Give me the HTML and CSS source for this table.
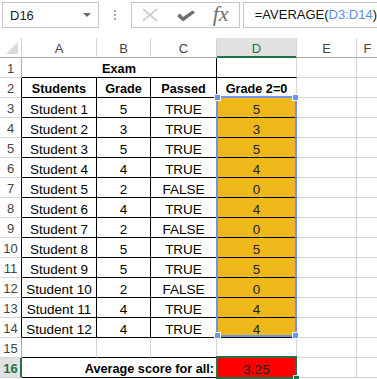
FILE: index.html
```html
<!DOCTYPE html>
<html lang="en">
<head>
    <meta charset="UTF-8">
    <title>Exam - AVERAGE</title>
    <link rel="stylesheet" href="styles.css">
</head>
<body>
    <!-- Formula bar -->
    <div class="formula-bar">
        <div class="name-box">
            <span>D16</span>
            <span class="caret"></span>
        </div>
        <div class="dots"><i></i><i></i><i></i></div>
        <div class="fx-box">
            <svg class="icon-x" width="18" height="14" viewBox="0 0 18 14">
                <path d="M2 1 L16 13 M16 1 L2 13" stroke="#c4c4c4" stroke-width="1.6" fill="none"/>
            </svg>
            <svg class="icon-check" width="20" height="12" viewBox="0 0 20 12">
                <path d="M1 6 L4 3.5 L7 7 L16.5 0.5 L19 2.5 L7 11.5 Z" fill="#6e6e6e"/>
            </svg>
            <span class="fx">fx</span>
        </div>
        <div class="formula">=AVERAGE(<span class="ref">D3:D14</span>)</div>
    </div>

    <!-- Sheet -->
    <div class="sheet">
        <!-- column headers -->
        <div class="corner"></div>
        <div class="ch">A</div>
        <div class="ch">B</div>
        <div class="ch">C</div>
        <div class="ch sel">D</div>
        <div class="ch">E</div>
        <div class="ch">F</div>

        <!-- row 1 -->
        <div class="rh">1</div>
        <div class="c span3 b bb br">Exam</div>
        <div class="c bb"></div>
        <div class="c"></div>
        <div class="c"></div>

        <!-- row 2 -->
        <div class="rh bk">2</div>
        <div class="c b bb br">Students</div>
        <div class="c b bb br">Grade</div>
        <div class="c b bb br">Passed</div>
        <div class="c b bb">Grade 2=0</div>
        <div class="c"></div>
        <div class="c"></div>

        <div class="rh bk">3</div>
        <div class="c bb br">Student 1</div>
        <div class="c bb br">5</div>
        <div class="c bb br">TRUE</div>
        <div class="c bb gold">5</div>
        <div class="c"></div>
        <div class="c"></div>

        <div class="rh bk">4</div>
        <div class="c bb br">Student 2</div>
        <div class="c bb br">3</div>
        <div class="c bb br">TRUE</div>
        <div class="c bb gold">3</div>
        <div class="c"></div>
        <div class="c"></div>

        <div class="rh bk">5</div>
        <div class="c bb br">Student 3</div>
        <div class="c bb br">5</div>
        <div class="c bb br">TRUE</div>
        <div class="c bb gold">5</div>
        <div class="c"></div>
        <div class="c"></div>

        <div class="rh bk">6</div>
        <div class="c bb br">Student 4</div>
        <div class="c bb br">4</div>
        <div class="c bb br">TRUE</div>
        <div class="c bb gold">4</div>
        <div class="c"></div>
        <div class="c"></div>

        <div class="rh bk">7</div>
        <div class="c bb br">Student 5</div>
        <div class="c bb br">2</div>
        <div class="c bb br">FALSE</div>
        <div class="c bb gold">0</div>
        <div class="c"></div>
        <div class="c"></div>

        <div class="rh bk">8</div>
        <div class="c bb br">Student 6</div>
        <div class="c bb br">4</div>
        <div class="c bb br">TRUE</div>
        <div class="c bb gold">4</div>
        <div class="c"></div>
        <div class="c"></div>

        <div class="rh bk">9</div>
        <div class="c bb br">Student 7</div>
        <div class="c bb br">2</div>
        <div class="c bb br">FALSE</div>
        <div class="c bb gold">0</div>
        <div class="c"></div>
        <div class="c"></div>

        <div class="rh bk">10</div>
        <div class="c bb br">Student 8</div>
        <div class="c bb br">5</div>
        <div class="c bb br">TRUE</div>
        <div class="c bb gold">5</div>
        <div class="c"></div>
        <div class="c"></div>

        <div class="rh bk">11</div>
        <div class="c bb br">Student 9</div>
        <div class="c bb br">5</div>
        <div class="c bb br">TRUE</div>
        <div class="c bb gold">5</div>
        <div class="c"></div>
        <div class="c"></div>

        <div class="rh bk">12</div>
        <div class="c bb br">Student 10</div>
        <div class="c bb br">2</div>
        <div class="c bb br">FALSE</div>
        <div class="c bb gold">0</div>
        <div class="c"></div>
        <div class="c"></div>

        <div class="rh bk">13</div>
        <div class="c bb br">Student 11</div>
        <div class="c bb br">4</div>
        <div class="c bb br">TRUE</div>
        <div class="c bb gold">4</div>
        <div class="c"></div>
        <div class="c"></div>

        <div class="rh bk">14</div>
        <div class="c bb br">Student 12</div>
        <div class="c bb br">4</div>
        <div class="c bb br">TRUE</div>
        <div class="c bb gold">4</div>
        <div class="c"></div>
        <div class="c"></div>

        <div class="rh">15</div>
        <div class="c bb"></div>
        <div class="c bb"></div>
        <div class="c bb"></div>
        <div class="c bb"></div>
        <div class="c"></div>
        <div class="c"></div>

        <div class="rh active">16</div>
        <div class="c span3 b bb br right">Average score for all:</div>
        <div class="c bb red">3.25</div>
        <div class="c"></div>
        <div class="c"></div>

        <!-- range highlight of D3:D14 -->
        <div class="range">
            <i class="h tl"></i><i class="h tr"></i><i class="h bl"></i><i class="h brh"></i>
        </div>
        <!-- active cell D16 -->
        <div class="active-cell"><i class="fill"></i></div>
    </div>
</body>
</html>
```

FILE: styles.css
```css
html, body {
    margin: 0;
    padding: 0;
    background: #fff;
}
body {
    width: 377px;
    height: 379px;
    overflow: hidden;
    font-family: 'Liberation Sans', Arial, sans-serif;
    color: #000;
}

/* formula bar */
.formula-bar {
    height: 38px;
    box-sizing: border-box;
    display: flex;
    align-items: flex-start;
    padding: 2px 0 0 2px;
    white-space: nowrap;
}
.name-box {
    width: 99px;
    height: 26px;
    box-sizing: border-box;
    border: 1px solid #c6c6c6;
    display: flex;
    align-items: center;
    justify-content: space-between;
    padding: 0 7px 0 7px;
    font-size: 13px;
    color: #222;
}
.caret {
    width: 0;
    height: 0;
    border-left: 4px solid transparent;
    border-right: 4px solid transparent;
    border-top: 4px solid #6b6b6b;
}
.dots {
    width: 32px;
    height: 26px;
    display: flex;
    flex-direction: column;
    align-items: center;
    justify-content: center;
    gap: 2px;
}
.dots i {
    width: 2px;
    height: 2px;
    background: #a6a6a6;
}
.fx-box {
    width: 111px;
    height: 26px;
    box-sizing: border-box;
    border: 1px solid #c6c6c6;
    display: flex;
    align-items: center;
    padding-left: 9px;
}
.icon-x {
    margin-right: 17px;
}
.icon-check {
    margin-top: 2px;
    margin-right: 17px;
}
.fx {
    font-family: 'Liberation Serif', 'Times New Roman', serif;
    font-style: italic;
    font-size: 22px;
    color: #6e6e6e;
    line-height: 22px;
    margin-top: -2px;
}
.formula {
    margin-left: 3px;
    flex: 1;
    height: 26px;
    box-sizing: border-box;
    border: 1px solid #c6c6c6;
    border-right: none;
    padding-left: 11px;
    font-size: 13px;
    line-height: 24px;
    color: #111;
}
.formula .ref {
    color: #5b8ee6;
}

/* sheet grid */
.sheet {
    position: relative;
    display: grid;
    grid-template-columns: 22px 75px 54px 66px 80px 60px 22px;
    grid-template-rows: 20px;
    grid-auto-rows: 20px;
    font-size: 13.5px;
}
.sheet > div {
    box-sizing: border-box;
}
.corner {
    border-right: 1px solid #d4d4d4;
    border-bottom: 1px solid #ababab;
    position: relative;
}
.corner::after {
    content: "";
    position: absolute;
    right: 3px;
    bottom: 3px;
    border-left: 12px solid transparent;
    border-bottom: 12px solid #dcdcdc;
}
.ch {
    border-right: 1px solid #d4d4d4;
    border-bottom: 1px solid #ababab;
    display: flex;
    align-items: flex-end;
    justify-content: center;
    line-height: 16px;
    font-size: 13px;
    color: #444;
}
.ch.sel {
    background: #e1e1e1;
    color: #217346;
    border-bottom-color: #217346;
    box-shadow: inset 0 -1px 0 #217346;
}
.rh {
    border-right: 1px solid #ababab;
    border-bottom: 1px solid #d4d4d4;
    display: flex;
    align-items: center;
    justify-content: center;
    color: #444;
    font-size: 13px;
    padding-top: 1px;
}
.rh.bk {
    border-right-color: #000;
}
.rh.active {
    background: #e1e1e1;
    color: #217346;
    font-weight: bold;
    border-right-color: #217346;
    box-shadow: inset -1px 0 0 #217346;
}
.c {
    border-right: 1px solid #d4d4d4;
    border-bottom: 1px solid #d4d4d4;
    display: flex;
    align-items: flex-end;
    justify-content: center;
    line-height: 15px;
    white-space: nowrap;
}
.span3 {
    grid-column: span 3;
}
.b {
    font-weight: bold;
    font-size: 12.7px;
}
.right {
    justify-content: flex-end;
    padding-right: 2px;
}
.bb {
    border-bottom-color: #000;
}
.br {
    border-right-color: #000;
}
.gold {
    background: #f0b91b;
    color: #222;
}
.red {
    background: #ff0000;
    color: #222;
}

/* selection overlays */
.range {
    position: absolute;
    grid-column: 5 / 6;
    grid-row: 4 / 16;
    top: -2px;
    left: -1px;
    right: 0;
    bottom: 1px;
    border: 2px solid #6f95e8;
}
.range .h {
    position: absolute;
    width: 5px;
    height: 5px;
    background: #6f95e8;
    box-shadow: 0 0 0 1px #fff;
}
.range .tl { top: -3px; left: -3px; }
.range .tr { top: -3px; right: -3px; }
.range .bl { bottom: -3px; left: -3px; }
.range .brh { bottom: -3px; right: -3px; }
.active-cell {
    position: absolute;
    grid-column: 5 / 6;
    grid-row: 17 / 18;
    top: -2px;
    left: -1px;
    right: 0;
    bottom: -1px;
    border: 2px solid #217346;
}
.active-cell .fill {
    position: absolute;
    right: -4px;
    bottom: -4px;
    width: 5px;
    height: 5px;
    background: #217346;
    box-shadow: 0 0 0 1px #fff;
}
```
